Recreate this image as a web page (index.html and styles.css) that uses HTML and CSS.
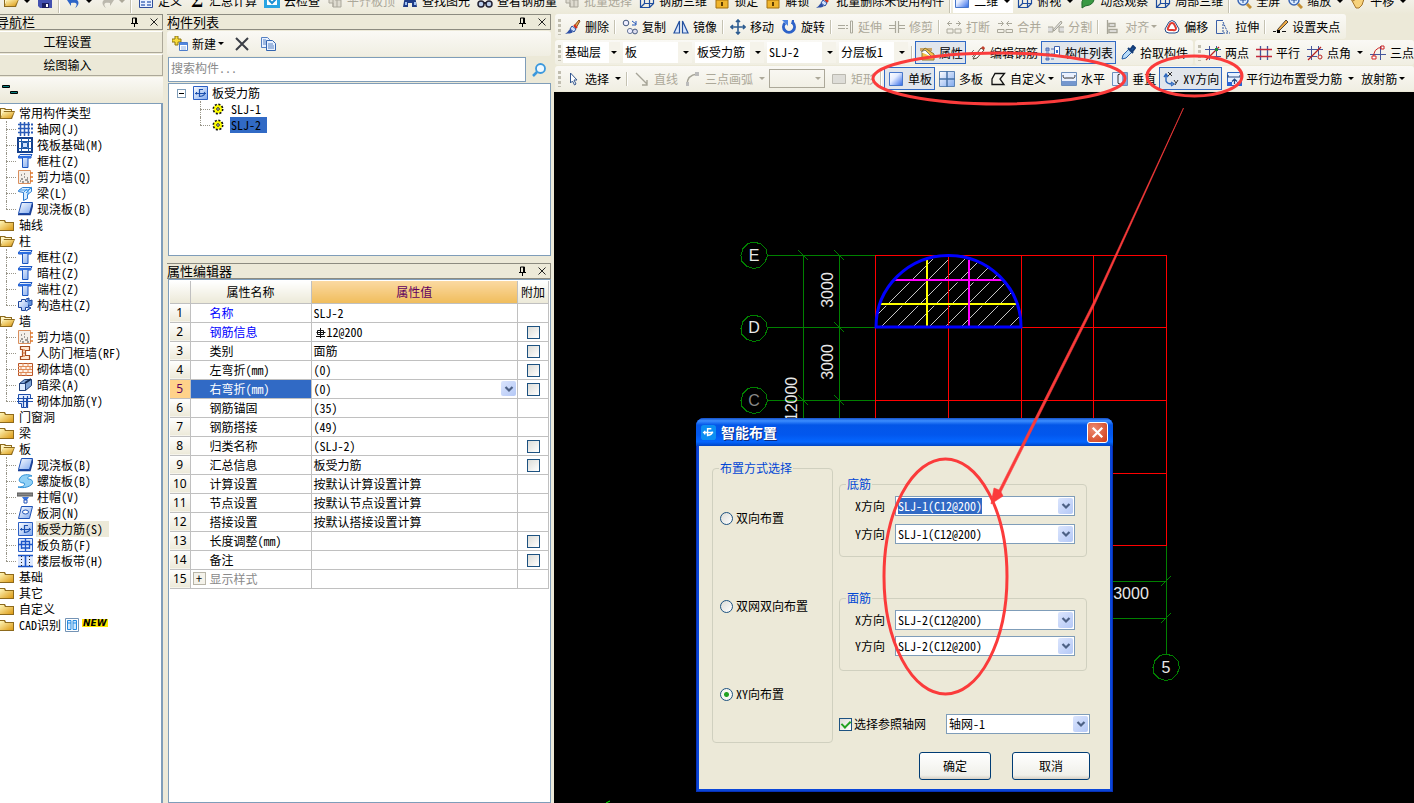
FILE: index.html
```html
<!DOCTYPE html>
<html lang="zh-CN">
<head>
<meta charset="utf-8">
<title>钢筋算量</title>
<link rel="stylesheet" href="styles.css">
</head>
<body>
<svg class="defs" aria-hidden="true">
<defs>
<linearGradient id="gFolder" x1="0" y1="0" x2="1" y2="1"><stop offset="0" stop-color="#fff6b8"/><stop offset="1" stop-color="#dc9a14"/></linearGradient>
<linearGradient id="gBlue" x1="0" y1="0" x2="1" y2="1"><stop offset="0" stop-color="#ffffff"/><stop offset="1" stop-color="#7fa8ee"/></linearGradient>
<linearGradient id="gDeep" x1="0" y1="0" x2="1" y2="1"><stop offset="0" stop-color="#ffffff"/><stop offset=".4" stop-color="#e4ecff"/><stop offset="1" stop-color="#2b66e8"/></linearGradient>
<symbol id="folder" viewBox="0 0 16 16"><path d="M0 3h5l1 2h8v9H0z" fill="#8d6a1d"/><path d="M0 4h4l1 2h8v7H0z" fill="url(#gFolder)"/></symbol>
<symbol id="folder-open" viewBox="0 0 16 16"><path d="M0 13V3h5l1 1h6v2h3l-3 8H0z" fill="#8d6a1d"/><path d="M1 12V4h3l1 1h6v1H4z" fill="#fff3c0"/><path d="M3 7h11l-3 6H1z" fill="url(#gFolder)"/></symbol>
<symbol id="axis" viewBox="0 0 16 16"><path d="M3.500 1v14M7.500 1v14M11.500 1v14M1 3.500h12M1 7.500h12M1 11.500h12" stroke="#2a5bb8" stroke-width="1.500"/><path d="M14 2.500h2v2h-2zM14 6.500h2v2h-2zM14 10.500h2v2h-2z" fill="#2a5bb8"/></symbol>
<symbol id="raft" viewBox="0 0 16 16"><path d="M1 1h14v14H1z" fill="#fff" stroke="#163f8a" stroke-width="2"/><path d="M4.500 1v14M11.500 1v14M1 4.500h14M1 11.500h14" fill="none" stroke="#1e5ba8"/><path d="M5.500 5.500h5v5h-5z" fill="#cfe4ff" stroke="#1e5ba8"/></symbol>
<symbol id="column" viewBox="0 0 16 16"><path d="M3 1.500h12l-1 2H1.500zM1.500 3.500H14V5H11v9.500H5.500V5h-4z" fill="url(#gBlue)" stroke="#1b55c0"/><path d="M1.500 4H14" stroke="#2c6de0" stroke-width="2"/></symbol>
<symbol id="shear" viewBox="0 0 16 16"><path d="M1.500 1.500h12v13h-12z" fill="#f4efe9" stroke="#d98f5e"/><path d="M4 6h1M7 8h1M4 10h2M8 11h3M10 9h1M5 13h2M10 13h2M3 12h1M7 5h1" stroke="#444"/><path d="M13 4h3M13 8h3M13 12h3" stroke="#e07a2c" stroke-width="1.500"/></symbol>
<symbol id="beam" viewBox="0 0 16 16"><path d="M1.500 5.500l4-3h9v4l-4 3v4l-4 2v-8l-5-1z" fill="#d6ecff" stroke="#2a7bd0"/><path d="M2 5h9l4-3M11 5v5M7 7l3-3M9 8l5-5" fill="none" stroke="#3a94e6"/></symbol>
<symbol id="slab" viewBox="0 0 16 16"><path d="M4.500 1.500h11l-3 11h-11z" fill="url(#gBlue)" stroke="#1c51b5"/><path d="M1 13.500h12l3-11" fill="none" stroke="#1a3f94" stroke-width="1.600"/></symbol>
<symbol id="struct" viewBox="0 0 16 16"><path d="M4.500 2.500h4v2h3v6h-3v3h-4v-3h-3v-6h3z" fill="url(#gBlue)" stroke="#1c459c"/><path d="M9 2l3-1v3l3-1v5l-3 1M12 10l2 1-5 3" fill="#5d8ed9" stroke="#1c459c"/></symbol>
<symbol id="doorwall" viewBox="0 0 16 16"><path d="M3.500 1.500h9v4h-4v5h4v4h-9v-3h2v-7h-2z" fill="#ffe9d4" stroke="#a34b20" stroke-width="1.200"/><path d="M5 5h3M5 8h3M5 11h3" stroke="#d56a2c"/></symbol>
<symbol id="brick" viewBox="0 0 16 16"><path d="M1.500 2.500h14v12h-14z" fill="#fff2e8" stroke="#b85427"/><path d="M1 5.500h14M1 8.500h14M1 11.500h14M6 2v3M11 2v3M4 6v3M9 6v3M13 6v3M6 9v3M11 9v3M4 12v3M9 12v3" stroke="#e08b58"/></symbol>
<symbol id="darkbeam" viewBox="0 0 16 16"><path d="M2.500 6.500l5-4h7v6l-6 5h-6z" fill="#7ea3d4" stroke="#1f3f78"/><path d="M2.500 6.500h6v7h-6z" fill="#dcebff" stroke="#1f3f78"/><path d="M8 6l6-4" stroke="#12294f" stroke-width="2"/></symbol>
<symbol id="brickrebar" viewBox="0 0 16 16"><path d="M1.500 1.500h12v4h-4v9h-5v-4h-3z" fill="#e6efff" stroke="#1c4dab"/><path d="M0 8.500h16M0 5.500h16M6.500 3v12M10.500 3v12" stroke="#1c4dab" stroke-width="1.200"/></symbol>
<symbol id="spiral" viewBox="0 0 16 16"><path d="M3 5c2-4 9-4 12-2-3 0-5 1-4 3 5 0 6 4 3 6-4 3-9 3-13 2 4 0 8-1 6-4-4 0-6-2-4-5z" fill="#8fd0f6" stroke="#2b8ed6"/></symbol>
<symbol id="cap" viewBox="0 0 16 16"><path d="M0 4h16v3H0z" fill="#888" stroke="#555"/><path d="M5 8h7l-2 3H7z" fill="#3872dd"/><path d="M7 11h3v3H7z" fill="#fff" stroke="#2255bb"/></symbol>
<symbol id="slabhole" viewBox="0 0 16 16"><path d="M4.500 1.500h11l-3 12h-11z" fill="url(#gBlue)" stroke="#1c51b5"/><ellipse cx="8.500" cy="7" rx="3" ry="2" fill="#fff" stroke="#1c51b5"/></symbol>
<symbol id="slabrebar" viewBox="0 0 16 16"><path d="M1.500 1.500h14v13h-14z" fill="url(#gBlue)" stroke="#2b5fc4"/><path d="M3 8.500h11M7.500 12V4.500H11M4.500 7v2.500M12.500 7q1 4-5 4.500" fill="none" stroke="#1b4fae" stroke-width="1.200"/></symbol>
<symbol id="slabneg" viewBox="0 0 16 16"><path d="M1.500 1.500h14v13h-14z" fill="#dfeaff" stroke="#2b5fc4"/><path d="M1 7.500h15M8.500 1v13M4.500 12V4.500h8V12M4 11h9" fill="none" stroke="#1b55c8" stroke-width="1.300"/></symbol>
<symbol id="strip" viewBox="0 0 16 16"><path d="M1 2h15v12H1z" fill="#dfeaff"/><path d="M1 2.500h15M1 13.500h15M8.500 3v10" stroke="#1b55c8" stroke-width="1.600"/><path d="M4.500 3v10M12.500 3v10" stroke="#222" stroke-dasharray="1 2"/></symbol>
<symbol id="cad" viewBox="0 0 16 16"><path d="M1.500 1.500h13v13h-13z" fill="#fff" stroke="#7393b5"/><path d="M3.500 3.500h3.500v9H3.500zM9 3.500h3.500v9H9zM4 6h3M9 6h3" fill="#cfe8ff" stroke="#268be0"/></symbol>
<symbol id="gear" viewBox="0 0 16 16"><circle cx="8" cy="8" r="4.500" fill="#ff0" stroke="#111" stroke-width="2" stroke-dasharray="2 1.500"/><circle cx="8" cy="8" r="3.800" fill="#ff0"/><circle cx="8" cy="8" r="1.300" fill="#fff" stroke="#222"/></symbol>
<symbol id="pin" viewBox="0 0 10 10"><path d="M2.500 6V1h4v5M5.500 1v5M1 6.500h7M4.500 7v3" fill="none" stroke="#000"/></symbol>
<symbol id="close" viewBox="0 0 10 10"><path d="M1.500 1.500l7 7M8.500 1.500l-7 7" stroke="#222"/></symbol>
<symbol id="chev" viewBox="0 0 10 10"><path d="M1.500 3L5 6.500 8.500 3" fill="none" stroke="#4d6185" stroke-width="2.200"/></symbol>
<symbol id="save" viewBox="0 0 16 16"><path d="M1 1h14v14H3l-2-2z" fill="#4351b0"/><path d="M4 1h8v6H4z" fill="#fff"/><path d="M5 10h7v5H5z" fill="#1b1f60"/><path d="M9 11h2v3H9z" fill="#fff"/></symbol>
<symbol id="undo" viewBox="0 0 16 16"><path d="M1 7l4-4v3c8-1 10 5 4 9 3-4 2-6-4-5v3z" fill="#2d65c8"/></symbol>
<symbol id="redo" viewBox="0 0 16 16"><path d="M15 7l-4-4v3C3 5 1 11 7 15 4 11 5 9 11 10v3z" fill="#bbb8ad"/></symbol>
<symbol id="form" viewBox="0 0 16 16"><path d="M1.500 1.500h13v13h-13z" fill="#eaf1ff" stroke="#2f4f9b"/><path d="M3 9h4M9 9h4M3 12h4M9 12h4M1 3h14" stroke="#4b70bd" stroke-width="1.600"/></symbol>
<symbol id="cloud" viewBox="0 0 16 16"><path d="M0 0h16v15H0z" fill="#28a4e2"/><path d="M3 4h10v8H3z" fill="#fff"/><path d="M5 7l3 3 5-5" fill="none" stroke="#1d8ed0" stroke-width="2"/></symbol>
<symbol id="graybox" viewBox="0 0 16 16"><path d="M2 3h6v4h6v7H6v-4H2z" fill="#dedbd0" stroke="#aaa79b"/><path d="M2 6h12M6 3v11M10 7v7" stroke="#aaa79b"/></symbol>
<symbol id="binoc" viewBox="0 0 16 16"><path d="M3 3h3v4h4V3h3l2 11h-5v-4H6v4H1z" fill="#203d87"/><path d="M3 9h2v3H3zM12 9h2v3h-2z" fill="#9dc0f4"/></symbol>
<symbol id="glasses" viewBox="0 0 16 16"><circle cx="4" cy="11" r="3" fill="#bcd0ee" stroke="#223" stroke-width="1.500"/><circle cx="12" cy="11" r="3" fill="#bcd0ee" stroke="#223" stroke-width="1.500"/><path d="M7 10h2" stroke="#223" stroke-width="2"/></symbol>
<symbol id="cube" viewBox="0 0 16 16"><path d="M1.500 5.500h9v9h-9zM5.500 1.500h9v9h-9zM1.500 5.500l4-4M10.500 5.500l4-4M10.500 14.500l4-4M1.500 14.500l4-4" fill="none" stroke="#1e4d9e" stroke-width="1.200"/></symbol>
<symbol id="lock" viewBox="0 0 16 16"><path d="M4 8V4a4 4 0 0 1 8 0v4" fill="none" stroke="#aaa" stroke-width="2"/><path d="M2 7h12v8H2z" fill="#f0b52c" stroke="#a4700c"/><path d="M8 9v4" stroke="#5d3d00" stroke-width="2"/></symbol>
<symbol id="brush" viewBox="0 0 16 16"><path d="M9 7l5-6 1 1-4 7z" fill="#eda34c" stroke="#814a1c"/><path d="M7 7l4 3-2 3-4-3z" fill="#cfe0ff" stroke="#2a4f9e"/><path d="M5 10l3 3c-2 2-4 1-8 2 2-1 3-3 5-5z" fill="#2d4fa6"/><path d="M9 6l3 3" stroke="#d8301f" stroke-width="2"/></symbol>
<symbol id="copy" viewBox="0 0 16 16"><circle cx="4" cy="4" r="2.800" fill="#eef" stroke="#455a80"/><circle cx="8" cy="12" r="2.600" fill="#eef" stroke="#6b7b9a"/><circle cx="13" cy="12.500" r="2.400" fill="#dde" stroke="#455a80"/><path d="M10 2l4 3M14 2v4h-4" fill="none" stroke="#2356b8"/></symbol>
<symbol id="mirror" viewBox="0 0 16 16"><path d="M6.500 2v12H1zM9.500 2v12H15z" fill="#dbe8ff" stroke="#24519f" stroke-width="1.200"/></symbol>
<symbol id="move" viewBox="0 0 16 16"><path d="M8 1v14M1 8h14M6 3l2-2 2 2M6 13l2 2 2-2M3 6L1 8l2 2M13 6l2 2-2 2" fill="none" stroke="#2e5d91" stroke-width="1.600"/></symbol>
<symbol id="rotate" viewBox="0 0 16 16"><path d="M4 4a5.500 5.500 0 1 0 8 0" fill="none" stroke="#2d62c8" stroke-width="3"/><path d="M1 1h6v6z" fill="#4b83e0"/><path d="M11 1h2v4h-3z" fill="#2d62c8"/></symbol>
<symbol id="extend" viewBox="0 0 16 16"><path d="M0 6.500h7M0 9.500h7M8 6.500h2M8 9.500h2M12.500 2h2v12h-2z" fill="none" stroke="#aaa89b"/></symbol>
<symbol id="trim" viewBox="0 0 16 16"><path d="M6.500 2v12M9.500 2v12M0 6.500h6M0 9.500h6M10 6.500h6M10 9.500h6" stroke="#aaa89b" stroke-width="1.200"/></symbol>
<symbol id="break" viewBox="0 0 16 16"><path d="M1 10h6v4H1zM9 10h6v4H9zM1 4.500h5M4 2L1.500 4.500 4 7M10 4.500h5M12 2l2.500 2.500L12 7" fill="none" stroke="#aaa89b"/></symbol>
<symbol id="join" viewBox="0 0 16 16"><path d="M.500 10.500H7v3H.500zM9 10.500h6.500v3H9zM1 4.500h5M4 2l2.500 2.500L4 7M10 4.500h5M12 2L9.500 4.500 12 7" fill="none" stroke="#aaa89b"/></symbol>
<symbol id="split" viewBox="0 0 16 16"><path d="M0 8h5v5H0M16 8h-5v5h5M5 11l8-9 1 2-8 8z" fill="#ddd" stroke="#a6a497"/></symbol>
<symbol id="align" viewBox="0 0 16 16"><path d="M2.500 1v14M4 4.500h6v3H4zM4 10.500h8v3H4z" fill="#eee" stroke="#a6a497" stroke-width="1.300"/></symbol>
<symbol id="offset" viewBox="0 0 16 16"><path d="M5 3q3-3 6 0l4 7q0 4-4 4H5q-4 0-4-4z" fill="#fff" stroke="#244a88"/><path d="M6 5q2-2 4 0l2 4q0 3-3 2H6q-3 0-2-2z" fill="#fff" stroke="#e03b31" stroke-width="2"/></symbol>
<symbol id="stretch" viewBox="0 0 16 16"><path d="M8 14.500H1.500v-13H8" fill="none" stroke="#3a5fa8"/><path d="M8 3l5 11M8 5v9h7" fill="none" stroke="#27509d" stroke-dasharray="2 1"/></symbol>
<symbol id="pencil" viewBox="0 0 16 16"><path d="M6 10l8-9 2 2-8 8-3 1z" fill="#f0aa43" stroke="#504536"/><path d="M1 12.500h3M10 12.500h4" stroke="#111"/><path d="M5 11h3v3H5z"/></symbol>
<symbol id="edit" viewBox="0 0 16 16"><path d="M1 8l3-3M2 12L5 9" stroke="#777"/><path d="M4 12l7-9 3 2-7 8-4 1z" fill="#fff" stroke="#504536"/><path d="M11 3l2-2 2 2-1 2z" fill="#c43e2b"/></symbol>
<symbol id="props" viewBox="0 0 16 16"><path d="M1 3h12v3H1z" fill="#caa66a"/><path d="M3 6l3-3 9 6v6H3z" fill="#f4c449" stroke="#8d7430"/><path d="M2 7l4-2 7 7" fill="#fff" stroke="#777"/></symbol>
<symbol id="list" viewBox="0 0 16 16"><path d="M1 3h3v3H1zM1 8h3v3H1zM1 13h3v2H1zM6 4h3M6 9h3M6 14h3" fill="#8ba4d5" stroke="#5071b7"/><path d="M9.500 1.500h5v10h-5z" fill="#fff" stroke="#3d61ae"/><path d="M11 5h2v3h-2z" fill="#3468cd"/></symbol>
<symbol id="dropper" viewBox="0 0 16 16"><path d="M2 14l1-4 6-6 3 3-6 6z" fill="#b9dcf8" stroke="#245da5"/><path d="M8 3l5 5M10 5l3-4 2 2-3 4z" fill="#1b5aa8" stroke="#153d77" stroke-width="2"/></symbol>
<symbol id="grid-a" viewBox="0 0 16 16"><path d="M4.500 1v14M11.500 1v14M0 4.500h16M0 11.500h16" stroke="#44569c"/><path d="M1 15L14 2" stroke="#b22" stroke-width="1.300"/><path d="M10 3h3v3h-3z" fill="#248a3a"/></symbol>
<symbol id="grid-b" viewBox="0 0 16 16"><path d="M4.500 1v14M11.500 1v14" stroke="#44569c" stroke-width="1.300"/><path d="M0 4.500h16M0 11.500h16" stroke="#c3283b" stroke-width="1.300"/></symbol>
<symbol id="grid-c" viewBox="0 0 16 16"><path d="M4.500 1v14M11.500 1v9M0 4.500h16M0 11.500h10" stroke="#44569c"/><path d="M1 15L14 2" stroke="#b22" stroke-width="1.300"/><circle cx="13" cy="12" r="2" fill="none" stroke="#b22"/></symbol>
<symbol id="grid-d" viewBox="0 0 16 16"><path d="M10.500 1v14M0 9.500h16" stroke="#44569c"/><path d="M4 14Q2 3 13 2" fill="none" stroke="#c22"/><path d="M2 11h4v3H2zM11 1h3v3h-3z" fill="#fff" stroke="#c22"/></symbol>
<symbol id="cursor" viewBox="0 0 16 16"><path d="M5.500 2v10l2-2 2 4 1.500-1-2-4h3z" fill="#fff" stroke="#34578f"/></symbol>
<symbol id="line" viewBox="0 0 16 16"><path d="M2 2l11 11M13 9v5H8" fill="none" stroke="#a6a497" stroke-width="1.400"/></symbol>
<symbol id="arc" viewBox="0 0 16 16"><path d="M2 14Q2 4 12 3" fill="none" stroke="#a6a497" stroke-width="1.500"/><path d="M10 1h4v4h-4zM1 11h3v4H1z" fill="#bbb"/></symbol>
<symbol id="rect" viewBox="0 0 16 16"><path d="M1.500 3.500h13v9h-13z" fill="#deddd8" stroke="#bbb9b0"/></symbol>
<symbol id="single" viewBox="0 0 16 16"><path d="M1.500 1.500h13v13h-13z" fill="url(#gDeep)" stroke="#4777ca"/></symbol>
<symbol id="multi" viewBox="0 0 16 16"><path d="M.500 .500h15v15H.500z" fill="url(#gBlue)" stroke="#5b83b4"/><path d="M8 0v16M0 8h16" stroke="#4671a6" stroke-width="1.500"/></symbol>
<symbol id="poly" viewBox="0 0 16 16"><path d="M5 2.500h9.500L10 8l4 5.500H2V8z" fill="none" stroke="#111" stroke-width="1.300"/></symbol>
<symbol id="horiz" viewBox="0 0 16 16"><path d="M.500 1.500h15v13H.500z" fill="#eaf1ff" stroke="#6c8fbd"/><path d="M1 10h14v4H1z" fill="#7497ce"/><path d="M2 4q0 4 3 3h6q3 1 3-3" fill="none" stroke="#333"/></symbol>
<symbol id="vert" viewBox="0 0 16 16"><path d="M.500 1.500h15v13H.500z" fill="#eaf1ff" stroke="#6c8fbd"/><path d="M10 2h5v12h-5z" fill="#86a9dc"/><path d="M8 3q-3 0-2 3v4q-1 3 2 3" fill="none" stroke="#333"/></symbol>
<symbol id="xy" viewBox="0 0 16 16"><path d="M3 4v6q1 3 6 3M1 6l2-3 2 3M8 11l3 2-3 2" fill="none" stroke="#2e68bd" stroke-width="1.400"/><path d="M5 1l4 4M9 1L5 5M11 9l2 3M15 9l-3 5" stroke="#333"/></symbol>
<symbol id="edge" viewBox="0 0 16 16"><path d="M1.500 1.500h14v13h-14z" fill="#e6f1ff" stroke="#2a65c1"/><path d="M1 11h5v4H1zM11 11h5v4h-5z" fill="#2864d4"/><path d="M2 4v2h12V4M8.500 13V8M6 10.500L8.500 8l2.500 2.500" fill="none" stroke="#264981" stroke-width="1.200"/></symbol>
<symbol id="leaf" viewBox="0 0 16 16"><path d="M2 13Q0 3 14 2q2 10-9 11l-3 2z" fill="#3a9943" stroke="#236a2c"/></symbol>
<symbol id="zoom" viewBox="0 0 16 16"><circle cx="7" cy="7" r="5" fill="#dcecff" stroke="#3a66b4" stroke-width="1.500"/><path d="M11 11l4 4" stroke="#c49036" stroke-width="3"/><path d="M4 7h6M7 4v6" stroke="#234f98"/></symbol>
<symbol id="hand" viewBox="0 0 16 16"><path d="M1 6l3 2V3l2-1v4l2-4 2 1v4l3-3 1 2-2 6-3 3H6z" fill="#f7d27b" stroke="#a6752a"/></symbol>
<symbol id="newitem" viewBox="0 0 16 16"><path d="M3 0h3v3h3v3H6v3H3V6H0V3h3z" fill="#f8dc3c" stroke="#8d7611"/><path d="M7.500 6.500h8v8h-8z" fill="#fff" stroke="#4c7ccb"/><path d="M8 7h7v2H8z" fill="#5287df"/><path d="M9 11h5M9 13h5" stroke="#8eb1e6"/></symbol>
<symbol id="delx" viewBox="0 0 16 16"><path d="M2 2l12 12M14 2L2 14" stroke="#3b3f46" stroke-width="2"/></symbol>
<symbol id="pages" viewBox="0 0 16 16"><path d="M1.500 1.500h6l2 2v8h-8z" fill="#e8f1ff" stroke="#5681c3"/><path d="M6.500 4.500h6l3 3v7h-9z" fill="#e8f1ff" stroke="#3465af"/><path d="M3 4h3M3 6h3M3 8h3M8 8h5M8 10h6M8 12h6" stroke="#5681c3"/></symbol>
<symbol id="search" viewBox="0 0 16 16"><circle cx="9.500" cy="6.500" r="4.500" fill="#eef8ff" stroke="#3b98dd" stroke-width="1.800"/><path d="M6 10l-4 4" stroke="#3b98dd" stroke-width="2.500"/></symbol>
<symbol id="rebar" viewBox="0 0 10 12"><path d="M4.500 1v10M1.500 3.500h6v4h-6zM0 9.500h9M.500 5.500h9" fill="none" stroke="#111"/></symbol>
</defs>
</svg>

<div class="app">
<header class="bar bar-top">
<button class="tool" aria-label="打开"><svg><use href="#folder-open"/></svg></button><i class="caret"></i>
<button class="tool" aria-label="保存"><svg><use href="#save"/></svg></button><i class="sep"></i>
<button class="tool" aria-label="撤销"><svg><use href="#undo"/></svg></button><i class="caret"></i>
<button class="tool off" aria-label="重做"><svg><use href="#redo"/></svg></button><i class="caret off"></i><i class="sep"></i>
<button class="tool"><svg><use href="#form"/></svg>定义</button>
<button class="tool"><b class="sigma">Σ</b>汇总计算</button>
<button class="tool"><svg><use href="#cloud"/></svg>云检查</button>
<button class="tool off"><svg><use href="#graybox"/></svg>平齐板顶</button>
<button class="tool"><svg><use href="#binoc"/></svg>查找图元</button>
<button class="tool"><svg><use href="#glasses"/></svg>查看钢筋量</button>
<button class="tool off"><svg><use href="#graybox"/></svg>批量选择</button>
<button class="tool"><svg><use href="#cube"/></svg>钢筋三维</button>
<button class="tool"><svg><use href="#lock"/></svg>锁定</button>
<button class="tool"><svg><use href="#lock"/></svg>解锁</button>
<button class="tool"><svg><use href="#brush"/></svg>批量删除未使用构件</button><i class="sep"></i>
<button class="tool field"><svg><use href="#single"/></svg>二维<i class="caret roomy"></i></button>
<button class="tool"><svg><use href="#cube"/></svg>俯视<i class="caret roomy"></i></button>
<button class="tool"><svg><use href="#leaf"/></svg>动态观察</button>
<button class="tool"><svg><use href="#cube"/></svg>局部三维</button><i class="sep"></i>
<button class="tool"><svg><use href="#zoom"/></svg>全屏</button>
<button class="tool"><svg><use href="#zoom"/></svg>缩放<i class="caret roomy"></i></button>
<button class="tool"><svg><use href="#hand"/></svg>平移<i class="caret roomy"></i></button>
</header>

<main class="work">
<nav class="panel nav">
<div class="head head-nav"><h2>导航栏</h2><svg><use href="#pin"/></svg><svg><use href="#close"/></svg></div>
<button class="stage">工程设置</button>
<button class="stage">绘图输入</button>
<div class="nav-tools"><svg viewBox="0 0 16 12"><path d="M.500 1.500h7v2h-7zM8.500 7.500h7v2h-7z" fill="#087f7f" stroke="#000"/></svg></div>
<ul class="tree">
<li><svg><use href="#folder-open"/></svg><span>常用构件类型</span>
<ul>
<li><svg><use href="#axis"/></svg><span>轴网(J)</span></li>
<li><svg><use href="#raft"/></svg><span>筏板基础(M)</span></li>
<li><svg><use href="#column"/></svg><span>框柱(Z)</span></li>
<li><svg><use href="#shear"/></svg><span>剪力墙(Q)</span></li>
<li><svg><use href="#beam"/></svg><span>梁(L)</span></li>
<li><svg><use href="#slab"/></svg><span>现浇板(B)</span></li>
</ul></li>
<li><svg><use href="#folder"/></svg><span>轴线</span></li>
<li><svg><use href="#folder-open"/></svg><span>柱</span>
<ul>
<li><svg><use href="#column"/></svg><span>框柱(Z)</span></li>
<li><svg><use href="#column"/></svg><span>暗柱(Z)</span></li>
<li><svg><use href="#column"/></svg><span>端柱(Z)</span></li>
<li><svg><use href="#struct"/></svg><span>构造柱(Z)</span></li>
</ul></li>
<li><svg><use href="#folder-open"/></svg><span>墙</span>
<ul>
<li><svg><use href="#shear"/></svg><span>剪力墙(Q)</span></li>
<li><svg><use href="#doorwall"/></svg><span>人防门框墙(RF)</span></li>
<li><svg><use href="#brick"/></svg><span>砌体墙(Q)</span></li>
<li><svg><use href="#darkbeam"/></svg><span>暗梁(A)</span></li>
<li><svg><use href="#brickrebar"/></svg><span>砌体加筋(Y)</span></li>
</ul></li>
<li><svg><use href="#folder"/></svg><span>门窗洞</span></li>
<li><svg><use href="#folder"/></svg><span>梁</span></li>
<li><svg><use href="#folder-open"/></svg><span>板</span>
<ul>
<li><svg><use href="#slab"/></svg><span>现浇板(B)</span></li>
<li><svg><use href="#spiral"/></svg><span>螺旋板(B)</span></li>
<li><svg><use href="#cap"/></svg><span>柱帽(V)</span></li>
<li><svg><use href="#slabhole"/></svg><span>板洞(N)</span></li>
<li><svg><use href="#slabrebar"/></svg><span class="current">板受力筋(S)</span></li>
<li><svg><use href="#slabneg"/></svg><span>板负筋(F)</span></li>
<li><svg><use href="#strip"/></svg><span>楼层板带(H)</span></li>
</ul></li>
<li><svg><use href="#folder"/></svg><span>基础</span></li>
<li><svg><use href="#folder"/></svg><span>其它</span></li>
<li><svg><use href="#folder"/></svg><span>自定义</span></li>
<li><svg><use href="#folder"/></svg><span>CAD识别</span> <svg><use href="#cad"/></svg><em class="new">NEW</em></li>
</ul>
</nav>

<div class="middle">
<section class="panel parts">
<div class="head"><h2>构件列表</h2><svg><use href="#pin"/></svg><svg><use href="#close"/></svg></div>
<div class="bar parts-bar">
<button class="tool"><svg><use href="#newitem"/></svg>新建<i class="caret"></i></button>
<button class="tool" aria-label="删除"><svg><use href="#delx"/></svg></button>
<button class="tool" aria-label="复制"><svg><use href="#pages"/></svg></button>
</div>
<div class="search"><input type="text" placeholder="搜索构件..." aria-label="搜索构件"><button aria-label="搜索"><svg><use href="#search"/></svg></button></div>
<ul class="tree parts-tree">
<li><i class="minus"></i><svg><use href="#slabrebar"/></svg><span>板受力筋</span>
<ul>
<li><svg><use href="#gear"/></svg><span>SLJ-1</span></li>
<li><svg><use href="#gear"/></svg><span class="picked">SLJ-2</span></li>
</ul></li>
</ul>
</section>
<section class="panel props">
<div class="head"><h2>属性编辑器</h2><svg><use href="#pin"/></svg><svg><use href="#close"/></svg></div>
<div class="sheet">
<table>
<colgroup><col class="c-no"><col class="c-name"><col><col class="c-add"></colgroup>
<thead><tr><th></th><th>属性名称</th><th class="hot">属性值</th><th>附加</th></tr></thead>
<tbody>
<tr><th>1</th><td class="key">名称</td><td>SLJ-2</td><td></td></tr>
<tr><th>2</th><td class="key">钢筋信息</td><td><svg class="rebar"><use href="#rebar"/></svg>12@200</td><td><input type="checkbox" aria-label="钢筋信息 附加"></td></tr>
<tr><th>3</th><td>类别</td><td>面筋</td><td><input type="checkbox" aria-label="类别 附加"></td></tr>
<tr><th>4</th><td>左弯折(mm)</td><td>(0)</td><td><input type="checkbox" aria-label="左弯折 附加"></td></tr>
<tr class="active"><th>5</th><td>右弯折(mm)</td><td><div class="cell-edit">(0)<button class="drop" aria-label="展开"><svg><use href="#chev"/></svg></button></div></td><td><input type="checkbox" aria-label="右弯折 附加"></td></tr>
<tr><th>6</th><td>钢筋锚固</td><td>(35)</td><td></td></tr>
<tr><th>7</th><td>钢筋搭接</td><td>(49)</td><td></td></tr>
<tr><th>8</th><td>归类名称</td><td>(SLJ-2)</td><td><input type="checkbox" aria-label="归类名称 附加"></td></tr>
<tr><th>9</th><td>汇总信息</td><td>板受力筋</td><td><input type="checkbox" aria-label="汇总信息 附加"></td></tr>
<tr><th>10</th><td>计算设置</td><td>按默认计算设置计算</td><td></td></tr>
<tr><th>11</th><td>节点设置</td><td>按默认节点设置计算</td><td></td></tr>
<tr><th>12</th><td>搭接设置</td><td>按默认搭接设置计算</td><td></td></tr>
<tr><th>13</th><td>长度调整(mm)</td><td></td><td><input type="checkbox" aria-label="长度调整 附加"></td></tr>
<tr><th>14</th><td>备注</td><td></td><td><input type="checkbox" aria-label="备注 附加"></td></tr>
<tr class="group"><th>15</th><td><button class="plus" aria-label="展开">+</button>显示样式</td><td></td><td></td></tr>
</tbody>
</table>
</div>
</section>
</div>

<section class="stagearea">
<div class="bars">
<div class="bar short"><i class="grip"></i>
<button class="tool"><svg><use href="#brush"/></svg>删除</button><i class="sep"></i>
<button class="tool"><svg><use href="#copy"/></svg>复制</button>
<button class="tool"><svg><use href="#mirror"/></svg>镜像</button><i class="sep"></i>
<button class="tool"><svg><use href="#move"/></svg>移动</button>
<button class="tool"><svg><use href="#rotate"/></svg>旋转</button><i class="sep"></i>
<button class="tool off"><svg><use href="#extend"/></svg>延伸</button>
<button class="tool off"><svg><use href="#trim"/></svg>修剪</button><i class="sep"></i>
<button class="tool off"><svg><use href="#break"/></svg>打断</button>
<button class="tool off"><svg><use href="#join"/></svg>合并</button>
<button class="tool off"><svg><use href="#split"/></svg>分割</button><i class="sep"></i>
<button class="tool off"><svg><use href="#align"/></svg>对齐<i class="caret"></i></button>
<button class="tool"><svg><use href="#offset"/></svg>偏移</button>
<button class="tool"><svg><use href="#stretch"/></svg>拉伸</button><i class="sep"></i>
<button class="tool"><svg><use href="#pencil"/></svg>设置夹点</button>
</div>
<div class="barline">
<div class="bar"><i class="grip"></i>
<div class="picks">
<label class="pick narrow"><select aria-label="楼层"><option>基础层</option></select><i class="caret"></i></label>
<label class="pick"><select aria-label="构件类别"><option>板</option></select><i class="caret"></i></label>
<label class="pick"><select aria-label="构件类型"><option>板受力筋</option></select><i class="caret"></i></label>
<label class="pick"><select aria-label="构件"><option>SLJ-2</option></select><i class="caret"></i></label>
<label class="pick"><select aria-label="分层"><option>分层板1</option></select><i class="caret"></i></label>
</div><i class="sep"></i>
<button class="tool on"><svg><use href="#props"/></svg>属性</button>
<button class="tool"><svg><use href="#edit"/></svg>编辑钢筋</button>
<button class="tool on"><svg><use href="#list"/></svg>构件列表</button>
<button class="tool"><svg><use href="#dropper"/></svg>拾取构件</button>
</div>
<div class="bar grow"><i class="grip"></i>
<button class="tool"><svg><use href="#grid-a"/></svg>两点</button>
<button class="tool"><svg><use href="#grid-b"/></svg>平行</button>
<button class="tool"><svg><use href="#grid-c"/></svg>点角<i class="caret roomy"></i></button>
<button class="tool"><svg><use href="#grid-d"/></svg>三点</button>
</div>
</div>
<div class="bar"><i class="grip"></i>
<button class="tool"><svg><use href="#cursor"/></svg>选择<i class="caret roomy"></i></button><i class="sep"></i>
<button class="tool off"><svg><use href="#line"/></svg>直线</button>
<button class="tool off"><svg><use href="#arc"/></svg>三点画弧<i class="caret roomy"></i></button>
<label class="pick blank"><select aria-label="画弧方式" disabled><option></option></select><i class="caret off"></i></label>
<button class="tool off"><svg><use href="#rect"/></svg>矩形</button><i class="sep"></i>
<button class="tool on"><svg><use href="#single"/></svg>单板</button>
<button class="tool"><svg><use href="#multi"/></svg>多板</button>
<button class="tool"><svg><use href="#poly"/></svg>自定义<i class="caret"></i></button>
<button class="tool"><svg><use href="#horiz"/></svg>水平</button>
<button class="tool"><svg><use href="#vert"/></svg>垂直</button>
<button class="tool on"><svg><use href="#xy"/></svg>XY方向</button>
<button class="tool"><svg><use href="#edge"/></svg>平行边布置受力筋<i class="caret roomy"></i></button>
<button class="tool">放射筋<i class="caret"></i></button>
</div>
</div>

<div class="canvas">
<svg class="drawing" viewBox="554 92 860 711" width="860" height="711">
<defs><clipPath id="dome"><path d="M876 327a72.500 72 0 0 1 145 0z"/></clipPath></defs>
<g stroke="#008000" fill="none" shape-rendering="crispEdges">
<path d="M767 255.500h109M767 327.500h109M767 400.500h109M803.500 255v180M839.500 255v180M1100 581.500h67M1100 618.500h67M1166.500 545v109"/>
<path d="M798 250l10 10M834 250l10 10M834 322l10 10M798 395l10 10M834 395l10 10M1161 586l10-10M1161 623l10-10"/>
<path id="b1" d="M754 242l7 2 5 5 1.500 7-2.500 6-5 5-6 1.500-7-2-5-5-1-6 2-7 5-5z"/>
<use href="#b1" y="73"/><use href="#b1" y="145"/><use href="#b1" x="412" y="412"/>
</g>
<path d="M876 255.500h291M876 327.500h291M876 400.500h291M876 473.500h291M876 545.500h291M875.500 255v290M948.500 255v290M1021.500 255v290M1093.500 255v290M1166.500 255v290" stroke="#f00" shape-rendering="crispEdges"/>
<g clip-path="url(#dome)">
<path d="M876 255h146v73H876z"/>
<path d="M800 327l80-80M816 327l80-80M832 327l80-80M848 327l80-80M865 327l80-80M881 327l80-80M897 327l80-80M913 327l80-80M929 327l80-80M945 327l80-80M961 327l80-80M977 327l80-80M993 327l80-80M1009 327l80-80" stroke="#c8c8c8" stroke-dasharray="30 3"/>
<path d="M948.500 255v72" stroke="#f00"/>
</g>
<path d="M881 304h135M927 260v66" stroke="#ff0" stroke-width="2"/>
<path d="M895 280h107M969 260v66" stroke="#f0f" stroke-width="2"/>
<path d="M876 327a72.500 71.500 0 0 1 145 0z" fill="none" stroke="#00f" stroke-width="3"/>
<g class="cadtext">
<text x="754" y="261">E</text><text x="754" y="333">D</text><text x="754" y="406" class="dim">C</text><text x="1166" y="673">5</text>
<text x="1131" y="599">3000</text>
<text transform="translate(833 290) rotate(-90)">3000</text>
<text transform="translate(833 362) rotate(-90)">3000</text>
<text transform="translate(797 399) rotate(-90)">12000</text>
</g>
<path d="M606 803l4-2" stroke="#0f0"/>
</svg>

<form class="dialog">
<div class="title"><svg class="badge" viewBox="0 0 16 16"><rect width="16" height="16" rx="3" fill="#0c8ef2"/><path d="M2 8h11M7 12V4h4M4 6v4M12 7q0 4-5 4" fill="none" stroke="#fff" stroke-width="1.500"/></svg><h1>智能布置</h1><button type="button" class="x" aria-label="关闭"><svg viewBox="0 0 20 20"><path d="M5 5l10 10M15 5L5 15" stroke="#fff" stroke-width="2.400"/></svg></button></div>
<div class="body">
<fieldset class="modes"><legend>布置方式选择</legend>
<label><input type="radio" name="mode">双向布置</label>
<label><input type="radio" name="mode">双网双向布置</label>
<label><input type="radio" name="mode" checked>XY向布置</label>
</fieldset>
<div class="settings">
<fieldset class="bars-set"><legend>底筋</legend>
<div class="row"><label for="bx">X方向</label><span class="combo"><input id="bx" value="SLJ-1(C12@200)" spellcheck="false" autofocus><button type="button" class="drop" aria-label="展开"><svg><use href="#chev"/></svg></button></span></div>
<div class="row"><label for="by">Y方向</label><span class="combo"><input id="by" value="SLJ-1(C12@200)" spellcheck="false"><button type="button" class="drop" aria-label="展开"><svg><use href="#chev"/></svg></button></span></div>
</fieldset>
<fieldset class="bars-set"><legend>面筋</legend>
<div class="row"><label for="tx">X方向</label><span class="combo"><input id="tx" value="SLJ-2(C12@200)" spellcheck="false"><button type="button" class="drop" aria-label="展开"><svg><use href="#chev"/></svg></button></span></div>
<div class="row"><label for="ty">Y方向</label><span class="combo"><input id="ty" value="SLJ-2(C12@200)" spellcheck="false"><button type="button" class="drop" aria-label="展开"><svg><use href="#chev"/></svg></button></span></div>
</fieldset>
<div class="ref"><label class="tick"><input type="checkbox" checked>选择参照轴网</label><span class="combo axisnet"><input value="轴网-1" aria-label="参照轴网" spellcheck="false"><button type="button" class="drop" aria-label="展开"><svg><use href="#chev"/></svg></button></span></div>
<div class="actions"><button type="button" class="push">确定</button><button type="button" class="push wide">取消</button></div>
</div>
</div>
</form>
</div>
</section>
</main>

<svg class="marks" width="1414" height="803" viewBox="0 0 1414 803" aria-hidden="true">
<g fill="none" stroke="#fb3b3b" stroke-width="3"><ellipse cx="999" cy="78.500" rx="126" ry="25.500"/><ellipse cx="1194.500" cy="76" rx="47.500" ry="20"/><ellipse cx="945.500" cy="576.500" rx="61.500" ry="117.500"/></g>
<path d="M1183.500 108L1093 303 999 490l-5-2-3 16 12-8-2-4L1095 304z" fill="#fb3b3b" stroke="#fb3b3b" stroke-width=".600"/>
</svg>
</div>
<script src="app.js"></script>
</body>
</html>
```

FILE: styles.css
```css
* { box-sizing: border-box; }

body {
  margin: 0;
  background: #ece9d8;
  color: #000;
  font: 12px/16px "Noto Sans Mono CJK SC", "Noto Sans CJK SC", sans-serif;
}

button, input, select { font: inherit; color: inherit; margin: 0; }
button { background: none; border: 0; padding: 0; white-space: nowrap; }
h1, h2 { margin: 0; font: inherit; }
ul { list-style: none; margin: 0; padding: 0; }
svg { display: block; flex: none; }
.defs { position: absolute; width: 0; height: 0; }

.app {
  position: relative;
  display: flex;
  flex-direction: column;
  height: 100vh;
  overflow: hidden;
}

/* Toolbars */
.bar {
  display: flex;
  align-items: center;
  height: 25px;
  min-width: 0;
  overflow: hidden;
  background: linear-gradient(#faf9f5, #f0eee2);
  border-radius: 3px;
}
.bar-top {
  flex: none;
  height: 14px;
  align-items: flex-end;
  background: linear-gradient(#f3f1e8, #ece9d8);
  border-radius: 0;
}
.tool {
  display: flex;
  flex: none;
  align-items: center;
  gap: 4px;
  height: 24px;
  padding: 0 2px 0 3px;
  border: 1px solid transparent;
}
.tool svg { width: 16px; height: 16px; }
.tool.on { background: #e1e6ec; border-color: #316ac5; height: 23px; }
.tool.off { color: #aca899; }
.tool.field { padding-left: 0; background: #fff; }
.sigma { width: 16px; font: bold 18px/20px "Liberation Serif", serif; text-align: center; }
.caret { display: flex; flex: none; align-items: center; width: 8px; }
.tool .caret { margin-left: -4px; padding-left: 2px; }
.tool .caret.roomy { width: 12px; padding-left: 6px; }
.caret::after { content: ""; border: 3px solid transparent; border-top-color: #000; border-bottom: 0; }
.off .caret::after, .caret.off::after { border-top-color: #aca899; }
.sep { flex: none; width: 2px; height: 14px; margin: 0 2px; background: #c5c2b2; border-right: 1px solid #fff; }
.bar-top > .tool, .bar-top > .sep, .bar-top > .caret { margin-bottom: 1px; }
.bar-top > .caret { height: 24px; margin-left: 1px; margin-right: 1px; }
.bar-top > .sep { height: 22px; }
.grip {
  flex: none;
  width: 3px;
  height: 16px;
  margin: 0 0 0 3px;
  background: repeating-linear-gradient(#c1beb0 0 3px, transparent 3px 5px);
}
.bars { display: flex; flex: none; flex-direction: column; gap: 1px; padding: 0 0 1px 1px; }
.short { align-self: flex-start; padding-right: 3px; max-width: 100%; }
.barline { display: flex; gap: 2px; }
.barline > .bar { flex: none; padding-right: 2px; }
.barline > .grow { flex: 1; padding-right: 0; }

.picks { display: flex; gap: 3px; margin: 0 1px 0 2px; }
.pick { display: flex; align-items: center; width: 69px; height: 21px; background: linear-gradient(90deg, #fff 80%, #f5f3ea 80%); }
.pick.narrow { width: 57px; }
.pick select { appearance: none; flex: 1; min-width: 0; height: 21px; padding: 0 0 2px 2px; border: 0; background: none; }
.pick .caret { width: 9px; }
.pick.blank { width: 56px; height: 19px; margin: 0 2px 0 1px; border: 1px solid #aca899; background: none; }

/* Work area */
.work { display: grid; grid-template-columns: 163px 384px 1fr; column-gap: 4px; flex: 1; min-height: 0; }
.panel { display: flex; flex-direction: column; min-height: 0; min-width: 0; }
.head {
  display: flex;
  flex: none;
  align-items: center;
  gap: 9px;
  height: 16px;
  margin-bottom: 1px;
  padding-right: 3px;
  border: 1px solid #8c8b80;
  border-left: 0;
}
.head h2 { flex: 1; font-size: 13px; line-height: 14px; overflow: hidden; white-space: nowrap; }
.head svg { width: 10px; height: 10px; }
.head-nav h2 { text-indent: -4px; }
.stage {
  flex: none;
  height: 22px;
  margin-bottom: 1px;
  padding-right: 27px;
  border: 1px solid #aca899;
  border-top-color: #fff;
  border-left: 0;
}
.nav-tools {
  display: flex;
  flex: none;
  align-items: center;
  height: 26px;
  padding-left: 2px;
  background: linear-gradient(#faf9f5, #ece9d8);
}
.nav-tools svg { width: 16px; height: 12px; }

.tree { flex: 1; background: #fff; border: 1px solid #7f9db9; border-width: 1px 2px 0 0; padding-top: 1px; overflow: hidden; }
.tree li { position: relative; display: flex; flex-wrap: wrap; align-items: center; column-gap: 2px; }
.tree svg { width: 16px; height: 16px; }
.tree span { padding: 0 1px; white-space: nowrap; }
.tree ul { width: 100%; }
.tree ul li { padding-left: 17px; column-gap: 3px; }
.tree ul li::before, .tree ul li::after { content: ""; position: absolute; left: 6px; }
.tree ul li::before { top: 0; height: 16px; border-left: 1px dotted #99968a; }
.tree ul li:last-child::before { height: 8px; }
.tree ul li::after { top: 8px; width: 10px; border-top: 1px dotted #99968a; }
.tree .current { background: #ece9d8; padding-right: 6px; }
.tree .picked { background: #316ac5; padding-right: 6px; }
.new { padding: 0 1px; margin-bottom: 4px; background: #ffe800; font: italic bold 9px/8px "DejaVu Sans", sans-serif; }

.middle { display: flex; flex-direction: column; gap: 7px; min-height: 0; }
.parts { flex: none; height: 242px; }
.parts-bar { flex: none; gap: 3px; margin-bottom: 1px; padding-left: 1px; }
.search { display: flex; flex: none; gap: 5px; height: 25px; padding-left: 1px; margin-bottom: 1px; }
.search input { flex: 1; min-width: 0; border: 1px solid #7f9db9; padding: 0 2px 3px; background: #fff; }
.search input::placeholder { color: #8a8a8a; }
.search button { width: 20px; }
.search svg { width: 16px; height: 16px; }
.parts-tree, .sheet { border: 1px solid #7f9db9; margin-left: 1px; }
.parts-tree > li { padding-left: 8px; column-gap: 6px; }
.parts-tree > li > span { padding: 0; margin-left: -2px; }
.parts-tree ul li { padding-left: 33px; column-gap: 4px; }
.parts-tree ul li::before, .parts-tree ul li::after { left: 23px; }
.minus { width: 9px; height: 9px; border: 1px solid #7f9db9; background: linear-gradient(#000, #000) center / 5px 1px no-repeat; }

.props { flex: 1; }
.props .head { margin-bottom: 0; }
.sheet { flex: 1; background: #fff; padding: 1px; overflow: hidden; }
table { width: 379px; border-collapse: collapse; table-layout: fixed; }
.c-no { width: 20px; }
.c-name { width: 121px; }
.c-add { width: 31px; }
th, td { height: 19px; padding: 0 0 0 2px; border: 1px solid #c0c0c0; font-weight: normal; text-align: left; white-space: nowrap; }
tr > :first-child { border-left: 0; padding: 0; text-align: center; }
thead th { height: 22px; padding: 0; border-top: 0; background: linear-gradient(#fff, #ece9d8); text-align: center; }
thead .hot { background: linear-gradient(#fbd9a2, #f0bd5c); color: #600060; }
tbody th { background: linear-gradient(#fff, #ece9d8); line-height: 14px; font-family: "Noto Sans", sans-serif; }
tbody td { line-height: 14px; }
tbody td:nth-child(2) { padding-left: 19px; }
tbody td:last-child { padding: 0; text-align: center; }
.key { color: #00f; }
.active th { background: #ffd28a; color: #600060; }
.active td:nth-child(2) { background: #316ac5; color: #fff; }
.group td { color: #8a8a8a; }
.plus { float: left; width: 13px; height: 13px; margin-left: -17px; border: 1px solid #b8b5a8; background: #f4f2ea; color: #000; line-height: 10px; }
.rebar { display: inline-block; width: 10px; height: 12px; margin: 0 1px 0 2px; vertical-align: -2px; }
.cell-edit { display: flex; align-items: center; justify-content: space-between; padding-right: 1px; }
.drop {
  display: flex;
  flex: none;
  align-items: center;
  justify-content: center;
  width: 15px;
  height: 15px;
  border-radius: 2px;
  background: linear-gradient(135deg, #dbe5fd, #b4c8f6);
}
.drop svg { width: 10px; height: 10px; }
input[type="checkbox"] {
  appearance: none;
  display: inline-grid;
  place-content: center;
  width: 13px;
  height: 13px;
  border: 1px solid #1d5281;
  background: linear-gradient(135deg, #dcdcd7, #fff);
  vertical-align: middle;
}

/* Drawing area */
.stagearea { display: flex; flex-direction: column; min-width: 0; margin-left: -1px; }
.canvas { position: relative; flex: 1; background: #000; overflow: hidden; }
.drawing { position: absolute; left: 0; top: 0; }
.cadtext { fill: #e8e8e8; font: 16px "Liberation Sans", "Noto Sans CJK SC", sans-serif; text-anchor: middle; }
.cadtext .dim { fill: #888; }
.marks { position: absolute; left: 0; top: 0; pointer-events: none; }

/* Dialog window */
.dialog {
  position: absolute;
  left: 142px;
  top: 326px;
  width: 417px;
  padding: 0 3px 3px;
  border-radius: 8px 8px 0 0;
  background: #0a46d8;
  box-shadow: inset 0 0 0 1px #0831b8;
}
.title {
  display: flex;
  align-items: center;
  gap: 5px;
  height: 28px;
  margin: 0 -3px;
  padding: 1px 5px;
  border-radius: 8px 8px 0 0;
  background: linear-gradient(#1450c8, #3b8dff 10%, #0356e8 25%, #0257ee 60%, #0466ff 85%, #0045c4);
}
.title h1 { flex: 1; color: #fff; font-size: 14px; font-weight: bold; text-shadow: 1px 1px #0a2a80; }
.badge { width: 15px; height: 15px; }
.x { width: 21px; height: 21px; border: 1px solid #fff; border-radius: 3px; background: radial-gradient(circle at 30% 30%, #ec8a70, #d03a14); }
.x svg { width: 19px; height: 19px; }
.body { display: flex; gap: 6px; padding: 14px 20px 9px 13px; background: #ece9d8; }
fieldset { min-width: 0; margin: 0; border: 1px solid #d0d0bf; border-radius: 4px; }
legend { padding: 0 1px; color: #0046d5; }
.modes { display: flex; flex: none; flex-direction: column; gap: 72px; width: 121px; height: 283px; padding: 34px 0 0 7px; }
.modes legend { margin-left: -1px; }
.modes label { display: flex; align-items: center; gap: 3px; }
input[type="radio"] {
  appearance: none;
  width: 13px;
  height: 13px;
  border: 1px solid #1d5281;
  border-radius: 50%;
  background: linear-gradient(135deg, #dcdcd7, #fff);
}
input[type="radio"]:checked { background: radial-gradient(circle, #21a121 0 2px, #f6f6f2 3px); }
.settings { display: flex; flex: 1; flex-direction: column; padding-top: 16px; min-width: 0; }
.bars-set { display: flex; flex-direction: column; gap: 8px; width: 248px; height: 81px; margin-bottom: 33px; padding: 4px 11px 0 15px; }
.bars-set + .bars-set { gap: 6px; margin-bottom: 43px; }
.bars-set legend { margin-left: -9px; }
.row { display: flex; align-items: center; justify-content: space-between; }
.combo { display: flex; align-items: center; width: 180px; height: 20px; padding: 1px; border: 1px solid #7f9db9; background: #fff; }
.combo input { flex: 1; min-width: 0; height: 16px; padding: 0 1px 2px; border: 0; outline: 0; background: none; line-height: 14px; }
.combo input::selection { background: #316ac5; color: #fff; }
.combo .drop { height: 16px; }
.ref { display: flex; align-items: center; justify-content: space-between; margin-bottom: 18px; }
.tick { display: flex; align-items: center; gap: 2px; }
.tick input::after { content: ""; width: 4px; height: 7px; margin-top: -2px; border: solid #21a121; border-width: 0 2px 2px 0; transform: rotate(45deg); }
.axisnet { width: 144px; }
.actions { display: flex; justify-content: flex-end; gap: 21px; }
.push { width: 72px; height: 28px; border: 1px solid #003c74; border-radius: 3px; background: linear-gradient(#fff, #f0f0ea 85%, #d6d0c5); }
.push.wide { width: 78px; }
```

FILE: app.js
```js
const first = document.getElementById("bx");
first.focus();
first.select();
```
